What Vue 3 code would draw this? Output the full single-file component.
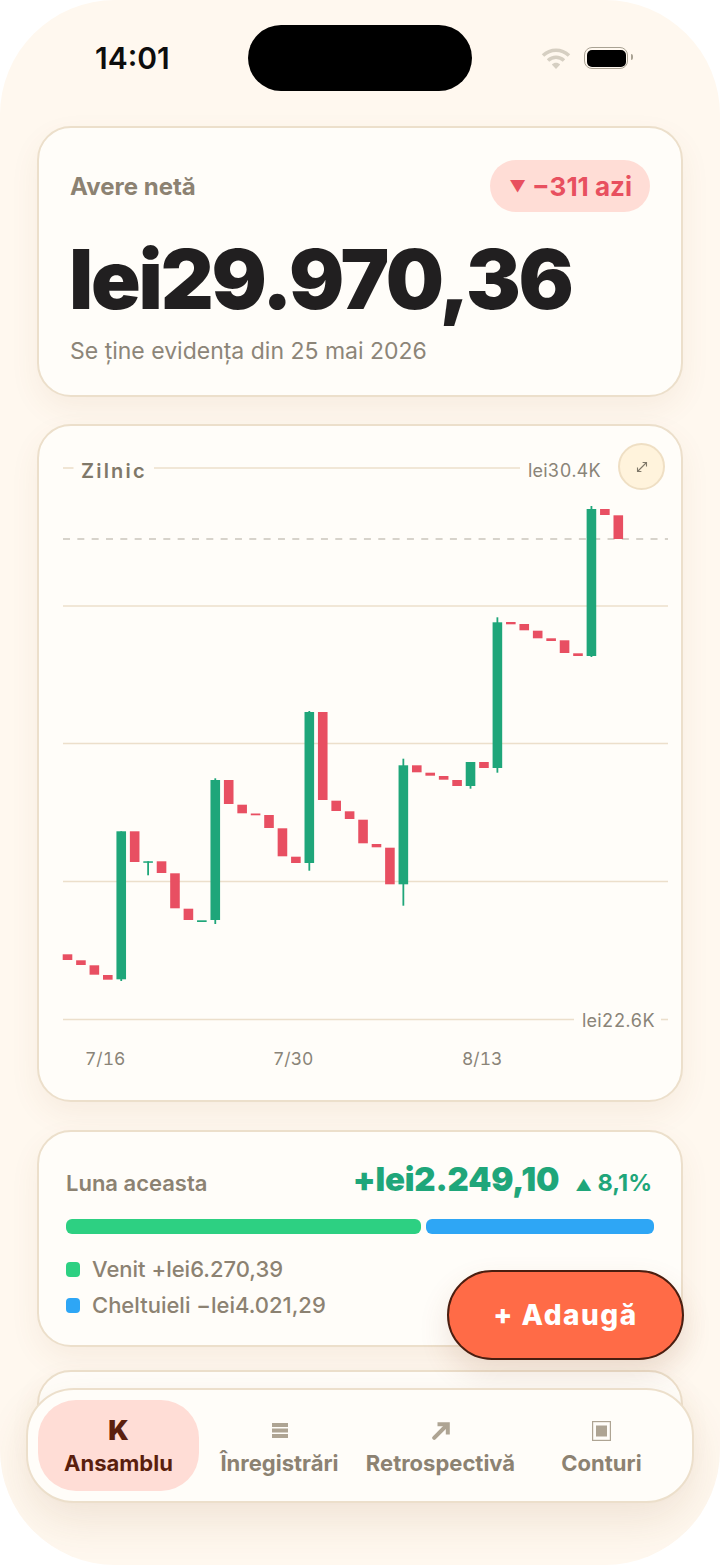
<template>
  <div class="screen">
    <header class="status">
      <span class="time">14:01</span>
      <div class="island"></div>
      <div class="status-icons">
        <svg class="wifi" width="30" height="23" viewBox="0 0 30 23">
          <path d="M2 8.5C9.5 1.5 20.5 1.5 28 8.5" fill="none" stroke="#d6cfc2" stroke-width="3.6" />
          <path d="M7 13.5C11.8 9.2 18.2 9.2 23 13.5" fill="none" stroke="#d6cfc2" stroke-width="3.6" />
          <path d="M10.8 17.4C13.3 15.2 16.7 15.2 19.2 17.4L15 22Z" fill="#d6cfc2" />
        </svg>
        <div class="battery"><div class="battery-fill"></div></div>
      </div>
    </header>

    <main class="content">
      <section class="card worth">
        <div class="worth-top">
          <span class="worth-label">Avere netă</span>
          <span class="pill"><span class="pill-arrow">▼</span> −311 azi</span>
        </div>
        <div class="worth-value">lei29.970,36</div>
        <div class="worth-sub">Se ține evidența din 25 mai 2026</div>
      </section>

      <section class="card chart-card">
        <svg class="chart" width="642" height="674" viewBox="39 426 642 674">
          <line v-for="(l, i) in gridLines" :key="i" :x1="l[0]" :x2="l[1]" :y1="l[2]" :y2="l[2]" class="grid-line" />
          <line x1="63" x2="668" y1="539" y2="539" class="dash-line" />
          <g v-for="(c, i) in candles" :key="i">
            <line
              v-if="c[2] !== c[0] || c[3] !== c[1]"
              :x1="candleX(i) + 4.8" :x2="candleX(i) + 4.8" :y1="c[2]" :y2="c[3]"
              class="wick"
            />
            <rect :x="candleX(i)" :y="c[0]" width="9.6" :height="c[1] - c[0]" :fill="c[4] ? '#1fa67a' : '#e84f62'" />
          </g>
          <text x="81" y="477.5" class="chart-title">Zilnic</text>
          <text x="528" y="477" class="chart-axis">lei30.4K</text>
          <text x="582" y="1027" class="chart-axis">lei22.6K</text>
          <text x="85" y="1064.5" class="chart-axis date">7/16</text>
          <text x="273" y="1064.5" class="chart-axis date">7/30</text>
          <text x="462" y="1064.5" class="chart-axis date">8/13</text>
        </svg>
        <button class="expand">
          <svg width="14" height="14" viewBox="0 0 14 14" fill="none" stroke="#7f7869" stroke-width="1.1">
            <path d="M2.5 11.5L11.5 2.5M7.6 2.5H11.5V6.4M2.5 7.6V11.5H6.4" />
          </svg>
        </button>
      </section>

      <section class="card month">
        <div class="month-top">
          <span class="month-label">Luna aceasta</span>
          <span class="month-value">+lei2.249,10</span>
          <span class="month-pct"><span class="pct-arrow">▲</span> 8,1%</span>
        </div>
        <div class="bars">
          <div class="bar income"></div>
          <div class="bar spend"></div>
        </div>
        <div class="legend-row"><i class="dot income"></i>Venit +lei6.270,39</div>
        <div class="legend-row"><i class="dot spend"></i>Cheltuieli −lei4.021,29</div>
      </section>

      <section class="card next"></section>
    </main>

    <button class="fab">+ Adaugă</button>

    <nav class="tabs">
      <div v-for="t in tabs" :key="t.label" class="tab" :class="{ active: t.active }">
        <div class="tab-icon">
          <span v-if="t.icon === 'k'" class="k">K</span>
          <svg v-else-if="t.icon === 'list'" width="16" height="15" viewBox="0 0 16 15" fill="#aea493">
            <rect y="0" width="16" height="4" /><rect y="5.5" width="16" height="4" /><rect y="11" width="16" height="4" />
          </svg>
          <svg v-else-if="t.icon === 'arrow'" width="18" height="18" viewBox="0 0 18 18" fill="none" stroke="#aea493" stroke-width="4">
            <path d="M2.2 15.8L14.5 3.5" stroke-linecap="round" />
            <path d="M5.5 2.2H15.8V12.5" />
          </svg>
          <svg v-else width="19" height="20" viewBox="0 0 19 20">
            <rect x="0.6" y="0.6" width="17.8" height="18.8" fill="none" stroke="#aea493" stroke-width="1.2" />
            <rect x="4" y="4.5" width="11" height="11" fill="#aea493" />
          </svg>
        </div>
        <span class="tab-label">{{ t.label }}</span>
      </div>
    </nav>
  </div>
</template>

<script setup>
const tabs = [
  { label: 'Ansamblu', icon: 'k', active: true },
  { label: 'Înregistrări', icon: 'list' },
  { label: 'Retrospectivă', icon: 'arrow' },
  { label: 'Conturi', icon: 'box' }
]

const gridLines = [
  [63, 73.5, 468],
  [154, 520, 468],
  [63, 668, 606],
  [63, 668, 743.5],
  [63, 668, 881.5],
  [63, 574, 1019.5],
  [661, 668, 1019.5]
]

// top, bottom, wick top, wick bottom, up
const candles = [
  [954.3, 960, 954.3, 960, 0],
  [960.3, 965, 960.3, 965, 0],
  [965.3, 974.7, 965.3, 974.7, 0],
  [975, 979.7, 975, 979.7, 0],
  [831.3, 979.3, 831.3, 981, 1],
  [831.3, 862, 831.3, 862, 0],
  [861.3, 862.8, 861.3, 875.3, 1],
  [861.3, 873, 861.3, 873, 0],
  [873.3, 908.3, 873.3, 908.3, 0],
  [908.7, 920, 908.7, 920, 0],
  [920.3, 922, 920.3, 922, 1],
  [780, 920, 778.3, 924, 1],
  [780, 804, 780, 804, 0],
  [804.7, 813.3, 804.7, 813.3, 0],
  [813.5, 815.3, 813.5, 815.3, 0],
  [815, 828, 815, 828, 0],
  [828.3, 856.3, 828.3, 856.3, 0],
  [856.7, 863, 856.7, 863, 0],
  [712, 863, 711, 870.7, 1],
  [712, 800, 712, 800, 0],
  [800.7, 811, 800.7, 811, 0],
  [811.3, 819, 811.3, 819, 0],
  [819.7, 843.3, 819.7, 843.3, 0],
  [844, 847.3, 844, 847.3, 0],
  [847.7, 884.3, 847.7, 884.3, 0],
  [765.3, 884.3, 758.7, 905.7, 1],
  [765.3, 772.3, 765.3, 772.3, 0],
  [772.7, 775.7, 772.7, 775.7, 0],
  [776, 779.7, 776, 779.7, 0],
  [780, 786, 780, 786, 0],
  [762, 786, 762, 788.7, 1],
  [762, 768, 762, 768, 0],
  [622.3, 768, 617.3, 772.7, 1],
  [622, 624.3, 622, 624.3, 0],
  [624, 630.3, 624, 630.3, 0],
  [630.7, 638.3, 630.7, 638.3, 0],
  [638.3, 641, 638.3, 641, 0],
  [640.3, 653, 640.3, 653, 0],
  [653.3, 656, 653.3, 656, 0],
  [509, 656, 506, 657, 1],
  [509, 515, 509, 515, 0],
  [515.3, 539, 515.3, 539, 0]
]

const candleX = (i) => 62.7 + i * 13.434
</script>

<style>
html, body {
  background: #fff;
}
</style>

<style scoped>
.screen {
  position: relative;
  width: 720px;
  height: 1565px;
  overflow: hidden;
  border-radius: 115px;
  background: #fff8ef;
  font-family: Inter, "Noto Sans", sans-serif;
  color: #211f20;
}

/* status bar */
.status {
  height: 126px;
  display: flex;
  padding: 25px 0 0 95px;
  box-sizing: border-box;
}
.time {
  width: 153px;
  font-size: 30px;
  font-weight: 600;
  line-height: 67px;
  color: #0d0d0d;
}
.island {
  width: 224px;
  height: 66px;
  border-radius: 34px;
  background: #000;
}
.status-icons {
  display: flex;
  gap: 13px;
  align-items: center;
  height: 66px;
  margin-left: 69px;
}
.battery {
  position: relative;
  box-sizing: content-box;
  width: 39px;
  height: 17px;
  padding: 1.5px;
  border: 1.5px solid #a9a293;
  border-radius: 8px;
}
.battery::after {
  content: "";
  position: absolute;
  right: -5.5px;
  top: 6px;
  width: 2px;
  height: 6px;
  border-radius: 0 2px 2px 0;
  background: #a9a293;
}
.battery-fill {
  width: 100%;
  height: 100%;
  border-radius: 5px;
  background: #000;
}

/* cards */
.content {
  display: flex;
  flex-direction: column;
  gap: 27px;
  padding: 0 37px;
}
.card {
  position: relative;
  box-sizing: border-box;
  border: 2px solid #ecdfcb;
  border-radius: 34px;
  background: #fffdf9;
  box-shadow: 0 12px 30px rgba(140, 90, 40, 0.07);
}

.worth {
  height: 271px;
  padding: 32px 31px 0 31px;
}
.worth-top {
  display: flex;
  justify-content: space-between;
  align-items: center;
}
.worth-label {
  font-size: 24px;
  font-weight: 700;
  color: #8c8272;
}
.pill {
  height: 52px;
  padding: 0 18px 0 19px;
  display: flex;
  align-items: center;
  gap: 6px;
  border-radius: 26px;
  background: #ffddd6;
  color: #e8505f;
  font-size: 26px;
  font-weight: 700;
  letter-spacing: 0;
}
.pill-arrow {
  font-size: 16px;
}
.worth-value {
  margin: 23px 0 0 -1px;
  font-size: 82px;
  line-height: 90px;
  font-weight: 900;
  letter-spacing: -2.2px;
}
.worth-sub {
  margin-top: 8px;
  font-size: 23px;
  line-height: 36px;
  color: #8c8578;
}

.chart-card {
  height: 678px;
}
.chart {
  display: block;
}
.grid-line {
  stroke: #ecdfcb;
  stroke-width: 1.6;
}
.dash-line {
  stroke: #b0a99d;
  stroke-width: 1.2;
  stroke-dasharray: 7 7.33;
}
.wick {
  stroke: #1fa67a;
  stroke-width: 1.8;
}
.chart-title {
  font-size: 20px;
  font-weight: 600;
  letter-spacing: 2.2px;
  fill: #7f7869;
}
.chart-axis {
  font-size: 18px;
  font-variant-numeric: tabular-nums;
  letter-spacing: 0.2px;
  fill: #8a8478;
}
.chart-axis.date {
  font-size: 17.5px;
  letter-spacing: 0;
}
.expand {
  position: absolute;
  top: 17px;
  right: 16px;
  width: 47px;
  height: 47px;
  padding: 0;
  display: flex;
  align-items: center;
  justify-content: center;
  border: 2px solid #efdfc4;
  border-radius: 50%;
  background: #fff3dc;
}

.month {
  height: 217px;
  margin-top: 1px;
  padding: 0 27px;
}
.month-top {
  display: flex;
  align-items: baseline;
  height: 87px;
  padding-top: 27px;
  box-sizing: border-box;
}
.month-label {
  font-size: 22px;
  font-weight: 600;
  color: #8c8272;
}
.month-value {
  margin-left: auto;
  font-size: 33px;
  font-weight: 900;
  letter-spacing: -0.2px;
  color: #1fa67a;
}
.month-pct {
  margin: 0 2px 0 16px;
  font-size: 23.5px;
  font-weight: 700;
  color: #1fa67a;
}
.pct-arrow {
  font-size: 16px;
}
.bars {
  display: flex;
  gap: 5px;
  height: 15px;
  margin-bottom: 17px;
}
.bar {
  border-radius: 6px;
}
.bar.income {
  flex: 355;
  background: #2dd082;
}
.bar.spend {
  flex: 228;
  background: #2ea6f5;
}
.legend-row {
  display: flex;
  align-items: center;
  gap: 12px;
  height: 36px;
  font-size: 22px;
  font-weight: 500;
  color: #8c8272;
}
.dot {
  width: 14px;
  height: 15px;
  border-radius: 4px;
}
.dot.income {
  background: #2dd082;
}
.dot.spend {
  background: #2ea6f5;
}

.next {
  height: 100px;
  margin-top: -4px;
}

.fab {
  position: absolute;
  left: 447px;
  top: 1270px;
  width: 237px;
  height: 90px;
  border: 2px solid #4a1e10;
  border-radius: 45px;
  background: #ff6b47;
  color: #fff;
  font-family: inherit;
  font-size: 28px;
  font-weight: 800;
  letter-spacing: 1.5px;
  box-shadow: 0 14px 30px rgba(140, 80, 40, 0.14);
}

.tabs {
  position: absolute;
  left: 26px;
  top: 1388px;
  width: 668px;
  height: 115px;
  box-sizing: border-box;
  padding: 10px;
  display: grid;
  grid-template-columns: repeat(4, 1fr);
  border: 2px solid #ecdfcb;
  border-radius: 48px;
  background: #fffdf9;
  box-shadow: 0 18px 44px rgba(130, 80, 30, 0.12);
}
.tab {
  display: flex;
  flex-direction: column;
  align-items: center;
  border-radius: 38px;
  color: #8c8272;
}
.tab.active {
  background: #ffddd6;
  color: #5a1f0e;
}
.tab-icon {
  height: 39px;
  padding-top: 11px;
  display: flex;
  align-items: center;
  justify-content: center;
}
.k {
  font-size: 27px;
  font-weight: 900;
}
.tab-label {
  font-size: 22px;
  font-weight: 700;
  white-space: nowrap;
}
</style>
